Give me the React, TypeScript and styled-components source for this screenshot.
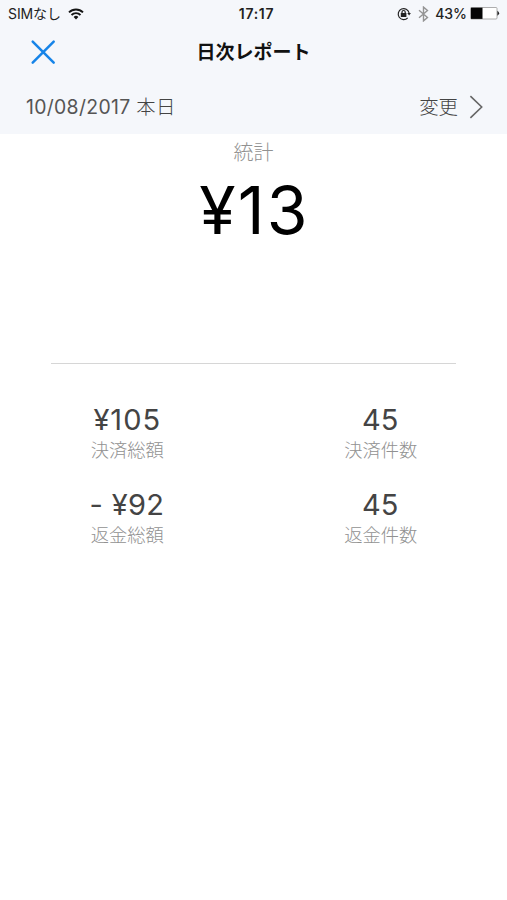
import React from "react";
import styled, { createGlobalStyle } from "styled-components";

const GlobalStyle = createGlobalStyle`
  * { box-sizing: border-box; }
  body {
    margin: 0;
    background: #fff;
    font-family: Inter, "Noto Sans CJK JP", sans-serif;
    white-space: nowrap;
  }
  svg { display: block; flex: none; }
`;

const Screen = styled.div`
  width: 507px;
  height: 900px;
  overflow: hidden;
  background: #fff;
`;

const Header = styled.header`
  height: 134px;
  background: #f5f7fb;
`;

const StatusBar = styled.div`
  display: grid;
  grid-template-columns: 1fr auto 1fr;
  align-items: center;
  height: 26px;
  padding: 0 7px 0 8px;
  color: #222;
  font-size: 14px;
  line-height: 26px;
`;

const StatusGroup = styled.div<{ $end?: boolean }>`
  display: flex;
  align-items: center;
  justify-content: ${(p) => (p.$end ? "flex-end" : "flex-start")};
`;

const Carrier = styled.span`
  margin-right: 7px;
  padding-top: 1px;
  font-size: 14px;
  letter-spacing: -0.1px;
`;

const Clock = styled.span`
  padding: 1px 0 0 5px;
  font-size: 14px;
  font-weight: 600;
  letter-spacing: 0.7px;
`;

const BatteryLevel = styled.span`
  margin: 0 3px 0 6px;
  padding-top: 1px;
  font-weight: 500;
`;

const BluetoothSlot = styled.span`
  margin-left: 7px;
`;

const NavBar = styled.div`
  display: grid;
  grid-template-columns: 87px 1fr 87px;
  align-items: center;
  height: 52px;
`;

const CloseButton = styled.button`
  display: flex;
  margin: 0 0 0 30px;
  padding: 0;
  border: 0;
  background: none;
`;

const Title = styled.h1`
  margin: 0;
  padding-top: 2px;
  color: #111;
  font-size: 19px;
  font-weight: 700;
  line-height: 50px;
  text-align: center;
`;

const DateRow = styled.div`
  display: flex;
  align-items: center;
  justify-content: space-between;
  height: 56px;
  padding: 2px 23px 0 26px;
  color: #555;
  font-size: 19.4px;
  line-height: 54px;
`;

const DateText = styled.span`
  letter-spacing: 0.32px;
`;

const LightText = styled.span`
  color: #444;
  font-weight: 300;
`;

const ChangeButton = styled.button`
  display: flex;
  align-items: center;
  gap: 11px;
  padding: 0;
  border: 0;
  background: none;
  color: inherit;
  font: inherit;
`;

const Summary = styled.section`
  height: 229px;
  margin: 0 51px;
  padding-top: 5px;
  text-align: center;
`;

const SummaryLabel = styled.div`
  color: #919191;
  font-size: 20px;
  font-weight: 300;
  line-height: 29px;
`;

const Total = styled.div`
  padding-left: 2px;
  color: #000;
  font-size: 66px;
  line-height: 84px;
  letter-spacing: 2.2px;
`;

const Divider = styled.hr`
  height: 1px;
  margin: 0 51px;
  border: 0;
  background: #d6d6d6;
`;

const Stats = styled.section`
  display: grid;
  grid-template-columns: 1fr 1fr;
  row-gap: 19px;
  padding-top: 38px;
`;

const Stat = styled.div`
  height: 66px;
  text-align: center;
`;

const StatValue = styled.div<{ $spacing: number }>`
  padding-left: ${(p) => p.$spacing}px;
  color: #444;
  font-size: 29px;
  line-height: 36px;
  letter-spacing: ${(p) => p.$spacing}px;
`;

const StatLabel = styled.div`
  padding-left: 1px;
  color: #919191;
  font-size: 18.3px;
  font-weight: 300;
  line-height: 24px;
`;

const stats = [
  { value: "¥105", label: "決済総額", spacing: 1 },
  { value: "45", label: "決済件数", spacing: 0 },
  { value: "- ¥92", label: "返金総額", spacing: 0.3 },
  { value: "45", label: "返金件数", spacing: 0 },
];

const WifiIcon = () => (
  <svg width="16" height="12" viewBox="0 0 16 12" fill="none" stroke="#151515" strokeWidth="1.9">
    <path d="M1 4.4C4.9.5 11.1.5 15 4.4" />
    <path d="M3.5 7C6 4.5 10 4.5 12.5 7" />
    <path d="M8 11.4 5.6 9a3.4 3.4 0 0 1 4.8 0Z" fill="#151515" stroke="none" />
  </svg>
);

const RotationLockIcon = () => (
  <svg width="14" height="14" viewBox="0 0 14 14" fill="none" stroke="#222" strokeWidth="1.2">
    <path d="M10.7 10.9A5.5 5.5 0 1 1 12.1 6" />
    <path d="M10.3 6h3.6l-1.8 2.6Z" fill="#222" stroke="none" />
    <rect x="3.8" y="6.1" width="5.6" height="4" rx=".4" fill="#222" stroke="none" />
    <path d="M5 6.3V5.1a1.6 1.6 0 0 1 3.2 0v1.2" />
  </svg>
);

const BluetoothIcon = () => (
  <svg width="11" height="16" viewBox="0 0 11 16" fill="none" stroke="#949494" strokeWidth="1.4">
    <path d="m1 4.2 8.5 7.3-4 3.4V1.1l4 3.4L1 11.8" />
  </svg>
);

const BatteryIcon = () => (
  <svg width="30" height="13" viewBox="0 0 30 13">
    <rect x=".5" y=".5" width="26.5" height="11.5" rx="1" fill="#fff" stroke="#999" strokeWidth=".8" />
    <path d="M1 .7h11.5v11.2H1Z" fill="#050505" />
    <path d="M27.4 3.8q3.4 2.5 0 5Z" fill="#222" />
  </svg>
);

const CloseIcon = () => (
  <svg width="26" height="26" viewBox="0 0 26 26" fill="none" stroke="#1684e8" strokeWidth="2.5" strokeLinecap="round">
    <path d="m2.7 2.7 21 21M23.7 2.7l-21 21" />
  </svg>
);

const ChevronIcon = () => (
  <svg width="15" height="24" viewBox="0 0 15 24" fill="none" stroke="#666" strokeWidth="1.6">
    <path d="m1.4 1.2 11.3 10.8L1.4 22.8" />
  </svg>
);

export default function App() {
  return (
    <Screen>
      <GlobalStyle />
      <Header>
        <StatusBar>
          <StatusGroup>
            <Carrier>SIMなし</Carrier>
            <WifiIcon />
          </StatusGroup>
          <Clock>17:17</Clock>
          <StatusGroup $end>
            <RotationLockIcon />
            <BluetoothSlot>
              <BluetoothIcon />
            </BluetoothSlot>
            <BatteryLevel>43%</BatteryLevel>
            <BatteryIcon />
          </StatusGroup>
        </StatusBar>
        <NavBar>
          <CloseButton aria-label="閉じる">
            <CloseIcon />
          </CloseButton>
          <Title>日次レポート</Title>
        </NavBar>
        <DateRow>
          <DateText>
            10/08/2017 <LightText>本日</LightText>
          </DateText>
          <ChangeButton>
            <LightText>変更</LightText>
            <ChevronIcon />
          </ChangeButton>
        </DateRow>
      </Header>
      <Summary>
        <SummaryLabel>統計</SummaryLabel>
        <Total>¥13</Total>
      </Summary>
      <Divider />
      <Stats>
        {stats.map((stat) => (
          <Stat key={stat.label}>
            <StatValue $spacing={stat.spacing}>{stat.value}</StatValue>
            <StatLabel>{stat.label}</StatLabel>
          </Stat>
        ))}
      </Stats>
    </Screen>
  );
}
